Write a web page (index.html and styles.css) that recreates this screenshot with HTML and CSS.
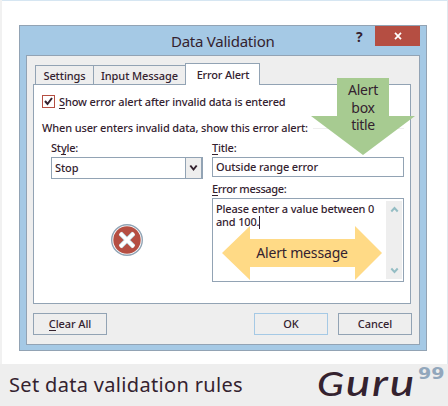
FILE: index.html
```html
<!DOCTYPE html>
<html lang="en">
<head>
<meta charset="utf-8">
<title>Set data validation rules</title>
<link rel="stylesheet" href="styles.css">
</head>
<body>
<main class="page">
  <section class="dialog">
    <header class="titlebar">
      <h1>Data Validation</h1>
      <span class="help">?</span>
      <span class="close"><svg width="8" height="8" viewBox="0 0 8 8"><path d="M1 .8 7 7.2M7 .8 1 7.2" stroke="#fff" stroke-width="1.7"/></svg></span>
    </header>
    <div class="body">
      <nav class="tabs">
        <span class="tab t1">Settings</span>
        <span class="tab t2">Input Message</span>
        <span class="tab active">Error Alert</span>
      </nav>
      <div class="panel">
        <div class="check"><span class="box"><svg width="11" height="11" viewBox="0 0 11 11"><path d="M2 5 4.5 8 9 2" fill="none" stroke="#34222f" stroke-width="2"/></svg></span><span class="check-label"><u>S</u>how error alert after invalid data is entered</span></div>
        <div class="legend"><span>When user enters invalid data, show this error alert:</span><i></i></div>
        <div class="fields">
          <div class="left">
            <label class="style-label">St<u>y</u>le:</label>
            <div class="select"><span>Stop</span><b><svg width="9" height="8" viewBox="0 0 9 8"><path d="M1.3 1.5 4.5 5.5 7.7 1.5" fill="none" stroke="#34222f" stroke-width="2"/></svg></b></div>
            <svg class="stop" width="34" height="34" viewBox="0 0 34 34"><circle cx="17" cy="17" r="15.3" fill="#fff" stroke="#91a4b5" stroke-width="1.4"/><circle cx="17" cy="17" r="13.7" fill="#b54e42"/><path d="m10.5 10.5 13 13m0-13-13 13" stroke="#b9dce6" stroke-width="4.6"/><path d="m10 10 14 14m0-14L10 24" stroke="#fff" stroke-width="3.2"/></svg>
          </div>
          <div class="right">
            <label class="title-label"><u>T</u>itle:</label>
            <div class="input"><span>Outside range error</span></div>
            <label class="msg-label"><u>E</u>rror message:</label>
            <div class="textarea">
              <p><span class="line">Please enter a value between 0</span><span class="line">and 100.<i class="caret"></i></span></p>
              <div class="scroll"><svg width="9" height="7" viewBox="0 0 9 7"><path d="M1.3 5.5 4.5 2 7.7 5.5" fill="none" stroke="#94bdc4" stroke-width="2"/></svg><svg width="9" height="7" viewBox="0 0 9 7"><path d="M1.3 1.5 4.5 5 7.7 1.5" fill="none" stroke="#94bdc4" stroke-width="2"/></svg></div>
            </div>
          </div>
        </div>
      </div>
      <footer class="actions">
        <span class="button clear"><span><u>C</u>lear All</span></span>
        <span class="button ok">OK</span>
        <span class="button cancel">Cancel</span>
      </footer>
    </div>
  </section>
  <div class="callout green"><svg width="104" height="77" viewBox="0 0 104 77"><path d="M26 0H78V38H104L52 77 0 38H26Z" fill="#a7cb91"/></svg><p>Alert<br>box<br>title</p></div>
  <div class="callout yellow"><svg width="160" height="54" viewBox="0 0 160 54"><path d="M0 27 28 0V13H133V0L160 27 133 54V41H28V54Z" fill="#ffda86"/></svg><p>Alert message</p></div>
  <footer class="caption"><h2>Set data validation rules</h2><span class="brand"><span>G</span>uru</span><span class="number">99</span></footer>
</main>
</body>
</html>
```

FILE: styles.css
```css
*{box-sizing:border-box}
body{margin:0;background:#fff;color:#34222f;font:500 11px/14px "Noto Sans","Open Sans",sans-serif;letter-spacing:-.08px}
h1,h2,p{margin:0;font-weight:400}
u{text-decoration:none;border-bottom:1px solid #34222f;display:inline-block;line-height:12px}
svg{display:block}
.page{position:relative;width:448px;height:406px;padding:25px 0 0 19px;overflow:hidden;background:linear-gradient(90deg,#f1f1f1 2px,transparent 2px,transparent 447px,#e0e8ee 447px),linear-gradient(#d6e6f2 1px,#fff 1px)}
.dialog{width:408px;height:326px;border:1px solid #92a3b4;background:#a5c9e5;padding:0 6px 6px}
.titlebar{height:29px;display:flex;position:relative}
h1{width:394px;padding-left:145px;font-size:15px;letter-spacing:-.25px;line-height:30px;white-space:nowrap}
.help{position:absolute;left:330px;top:2px;font:bold 14px/17px "Open Sans"}
.close{position:absolute;right:0;top:0;width:45px;height:20px;background:#b54e42;display:grid;place-items:center}
.body{width:394px;height:290px;border:1px solid #92a3b4;background:#eee;padding:7px 7px 8px 6px}
.tabs{height:22px;display:flex;align-items:flex-end;padding-left:2px;position:relative;z-index:1}
.tab{height:20px;border:1px solid #92a3b4;display:flex;justify-content:center;align-items:center;white-space:nowrap;padding-top:1px}
.t1{width:59px}.t2{width:93px;margin-left:-1px}
.active{height:22px;width:75px;margin-left:-1px;background:#fff;border-bottom:0;padding:0 0 0 1px;letter-spacing:-.2px}
.panel{width:378px;height:220px;border:1px solid #92a3b4;background:#fff;margin-top:-1px;padding:10px 6px 0 8px}
.check{display:flex;height:13px;align-items:center}
.box{width:13px;height:13px;border:1px solid #b54e42}
.check-label{margin-left:4px;white-space:nowrap;letter-spacing:-.14px}
.legend{margin-top:13px;height:14px;display:flex;align-items:center;white-space:nowrap;letter-spacing:-.13px}
.legend i{height:1px;flex:1;background:#eee;margin-left:5px}
.fields{display:flex;padding-left:9px;margin-top:6px}
.left{width:161px}.right{width:192px}
label{display:block;height:16px;line-height:14px;white-space:nowrap}
.style-label,.title-label{letter-spacing:-.2px}
.select{width:152px;height:22px;border:1px solid #92a3b4;display:flex;justify-content:space-between;align-items:center;padding-left:3px}
.select b{width:17px;height:20px;background:#eee;border:1px solid #92a3b4;border-width:0 1px 0 1px;display:grid;place-items:center}
.stop{margin:44px 0 0 59px}
.input{height:20px;border:1px solid #92a3b4;padding:2px 3px;white-space:nowrap;letter-spacing:-.13px}
.msg-label{height:21px;padding-top:5px;letter-spacing:-.35px}
.textarea{height:84px;border:1px solid #92a3b4;display:flex;padding:2px 1px 2px 3px;justify-content:space-between}
.textarea p{font-weight:500;line-height:13px;white-space:nowrap;padding-top:1px;letter-spacing:-.17px}
.line{display:block;height:13px}
.caret{display:inline-block;width:1px;height:13px;background:#34222f;vertical-align:-3px}
.scroll{width:16px;height:78px;background:#eee;display:flex;flex-direction:column;justify-content:space-between;align-items:center;padding:5px 0}
.actions{display:flex;margin-top:9px}
.button{width:74px;height:22px;border:1px solid #92a3b4;display:grid;place-items:center}
.ok{margin-left:147px;border-color:#a5c9e5}.cancel{margin-left:10px}
.callout{position:absolute;text-align:center;font-size:14px;font-weight:400}
.callout p{position:absolute;inset:0}
.green{left:311px;top:78px}.green p{padding-top:3px;line-height:17.5px;letter-spacing:-.3px}
.yellow{left:222px;top:226px}.yellow p{line-height:54px;letter-spacing:-.15px}
.caption{position:absolute;left:0;right:0;bottom:0;height:42px;background:#eee}
h2{padding-left:9px;font:20px/42px "Noto Sans";letter-spacing:.33px;white-space:nowrap}
.brand{position:absolute;left:317px;top:-3px;font:italic 500 37px/42px "Lato";letter-spacing:1.5px;transform:scaleX(1.24);transform-origin:left;white-space:nowrap}
.brand span{font-size:32px}
.number{position:absolute;left:418px;top:2px;font:bold 15px/16px "DejaVu Sans";letter-spacing:0;color:#92a7bc;transform:scaleX(1.27);transform-origin:left}
```
